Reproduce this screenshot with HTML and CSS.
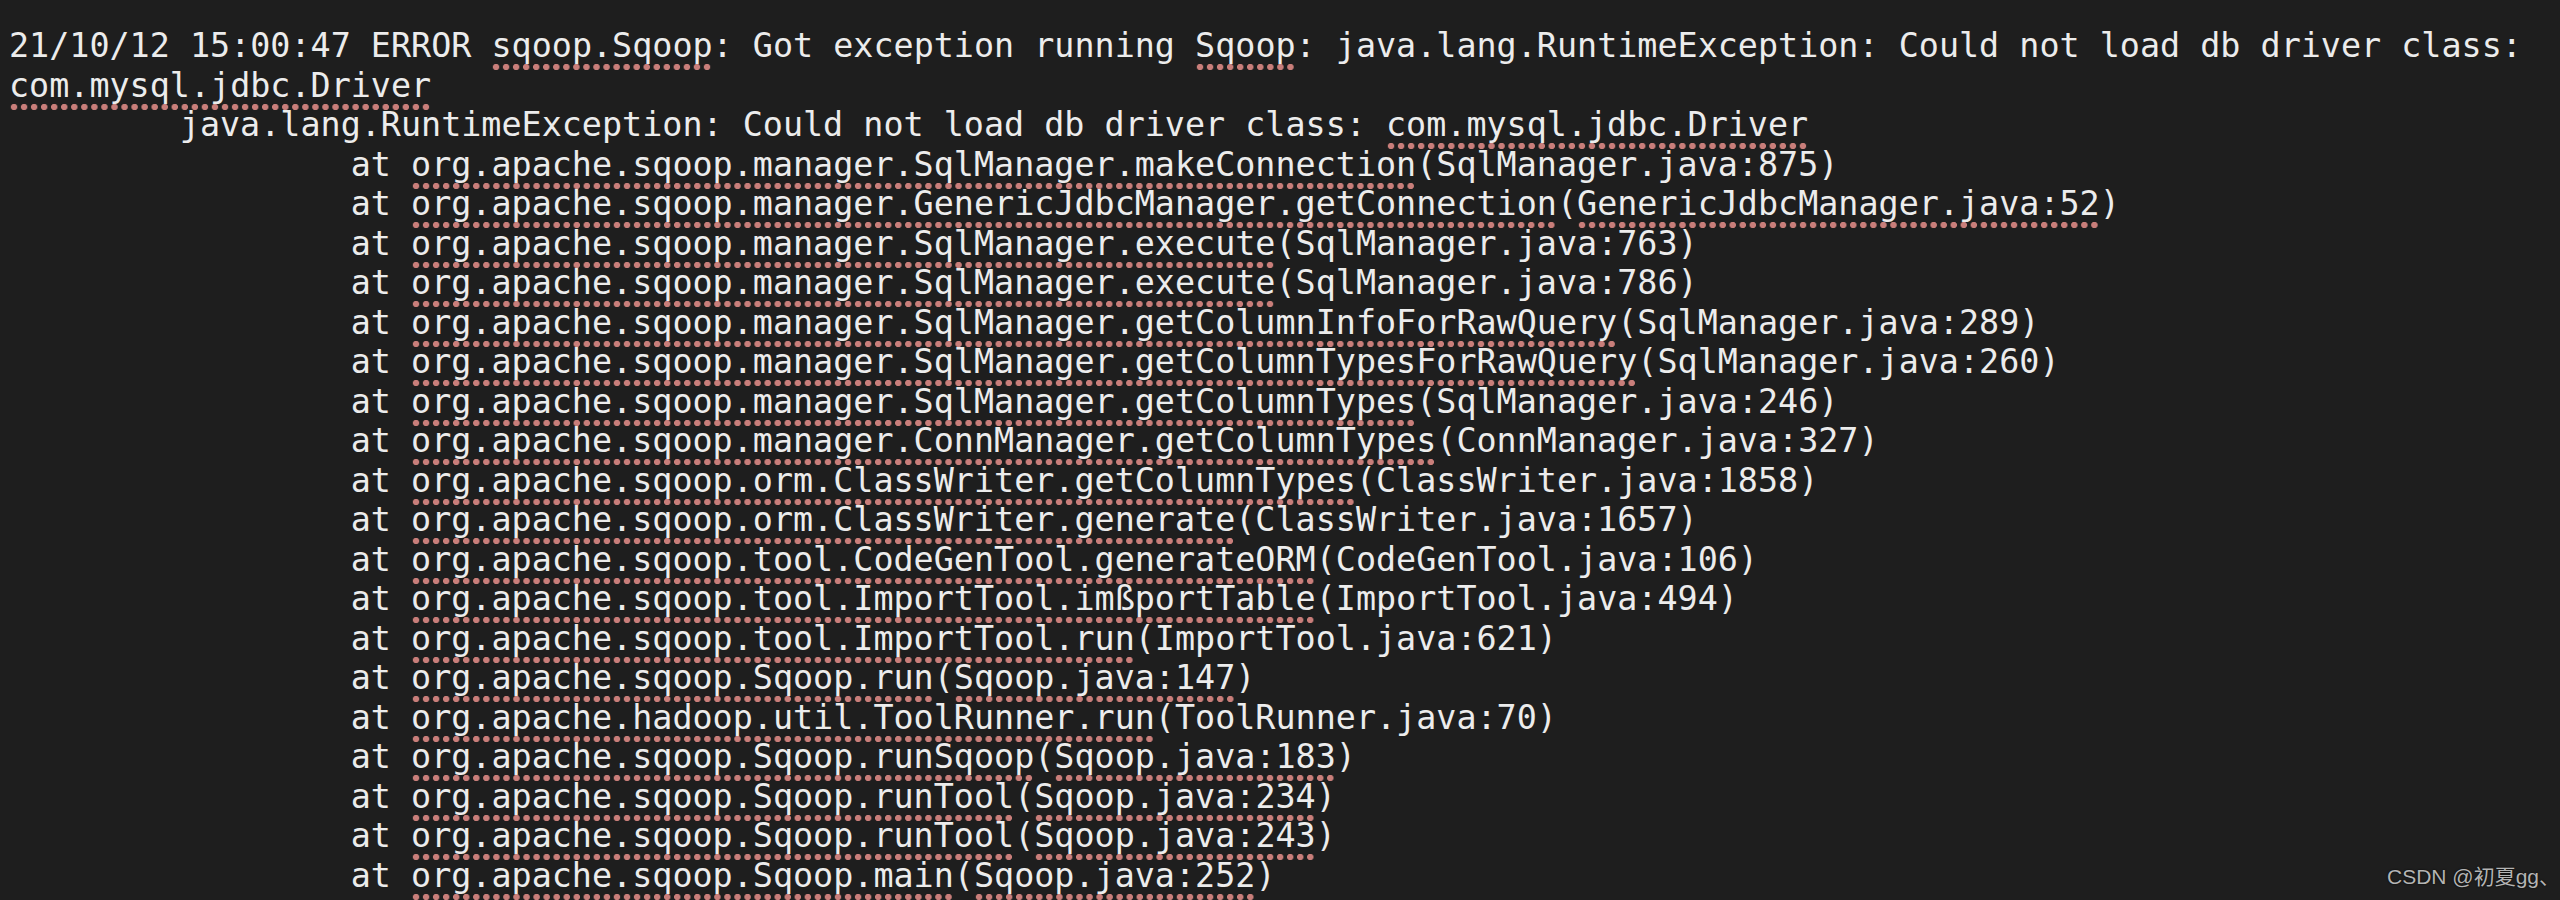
FILE: index.html
```html
<!DOCTYPE html>
<html lang="zh">
<head>
    <meta charset="UTF-8">
    <title>sqoop error</title>
    <link rel="stylesheet" href="styles.css">
</head>
<body>

<div class="term">
    <div class="ln">21/10/12 15:00:47 ERROR <span class="sq">sqoop.Sqoop</span>: Got exception running <span class="sq">Sqoop</span>: java.lang.RuntimeException: Could not load db driver class:</div>
    <div class="ln"><span class="sq">com.mysql.jdbc.Driver</span></div>
    <div class="ln tab1">java.lang.RuntimeException: Could not load db driver class: <span class="sq">com.mysql.jdbc.Driver</span></div>
    <div class="ln tab2">at <span class="sq">org.apache.sqoop.manager.SqlManager.makeConnection</span>(SqlManager.java:875)</div>
    <div class="ln tab2">at <span class="sq">org.apache.sqoop.manager.GenericJdbcManager.getConnection</span>(<span class="sq">GenericJdbcManager.java:52</span>)</div>
    <div class="ln tab2">at <span class="sq">org.apache.sqoop.manager.SqlManager.execute</span>(SqlManager.java:763)</div>
    <div class="ln tab2">at <span class="sq">org.apache.sqoop.manager.SqlManager.execute</span>(SqlManager.java:786)</div>
    <div class="ln tab2">at <span class="sq">org.apache.sqoop.manager.SqlManager.getColumnInfoForRawQuery</span>(SqlManager.java:289)</div>
    <div class="ln tab2">at <span class="sq">org.apache.sqoop.manager.SqlManager.getColumnTypesForRawQuery</span>(SqlManager.java:260)</div>
    <div class="ln tab2">at <span class="sq">org.apache.sqoop.manager.SqlManager.getColumnTypes</span>(SqlManager.java:246)</div>
    <div class="ln tab2">at <span class="sq">org.apache.sqoop.manager.ConnManager.getColumnTypes</span>(ConnManager.java:327)</div>
    <div class="ln tab2">at <span class="sq">org.apache.sqoop.orm.ClassWriter.getColumnTypes</span>(ClassWriter.java:1858)</div>
    <div class="ln tab2">at <span class="sq">org.apache.sqoop.orm.ClassWriter.generate</span>(ClassWriter.java:1657)</div>
    <div class="ln tab2">at <span class="sq">org.apache.sqoop.tool.CodeGenTool.generateORM</span>(CodeGenTool.java:106)</div>
    <div class="ln tab2">at <span class="sq">org.apache.sqoop.tool.ImportTool.imßportTable</span>(ImportTool.java:494)</div>
    <div class="ln tab2">at <span class="sq">org.apache.sqoop.tool.ImportTool.run</span>(ImportTool.java:621)</div>
    <div class="ln tab2">at <span class="sq">org.apache.sqoop.Sqoop.run</span>(<span class="sq">Sqoop.java:147</span>)</div>
    <div class="ln tab2">at <span class="sq">org.apache.hadoop.util.ToolRunner.run</span>(ToolRunner.java:70)</div>
    <div class="ln tab2">at <span class="sq">org.apache.sqoop.Sqoop.runSqoop</span>(<span class="sq">Sqoop.java:183</span>)</div>
    <div class="ln tab2">at <span class="sq">org.apache.sqoop.Sqoop.runTool</span>(<span class="sq">Sqoop.java:234</span>)</div>
    <div class="ln tab2">at <span class="sq">org.apache.sqoop.Sqoop.runTool</span>(<span class="sq">Sqoop.java:243</span>)</div>
    <div class="ln tab2">at <span class="sq">org.apache.sqoop.Sqoop.main</span>(<span class="sq">Sqoop.java:252</span>)</div>
</div>

<!-- 水印 -->
<div class="mark">CSDN @初夏gg、</div>

</body>
</html>
```

FILE: styles.css
```css
/* 终端背景 */
html, body {
    margin: 0;
    height: 100%;
    background-color: #1e1e1e;
    overflow: hidden;
}

body {
    position: relative;
}

.term {
    padding: 26px 0 0 9px;
    font-family: "DejaVu Sans Mono", "Liberation Mono", monospace;
    font-size: 33.4px;
    line-height: 39.5px;
    color: #ececec;
}

.ln {
    white-space: pre;
}

.tab1 {
    padding-left: calc(8ch + 10px);
}

.tab2 {
    padding-left: 17ch;
}

/* 拼写检查的点状下划线 */
.sq {
    padding-bottom: 6px;
    background-image: radial-gradient(circle, #c97e7a 2.9px, transparent 3.5px);
    background-size: 10.05px 8px;
    background-repeat: repeat-x;
    background-position: 0 100%;
}

/* 右下角水印 */
.mark {
    position: absolute;
    right: 0;
    bottom: 10px;
    font-family: "Liberation Sans", "Noto Sans CJK SC", sans-serif;
    font-size: 21px;
    color: #b4b4b4;
    text-shadow: 0 0 2px #000;
}
```
